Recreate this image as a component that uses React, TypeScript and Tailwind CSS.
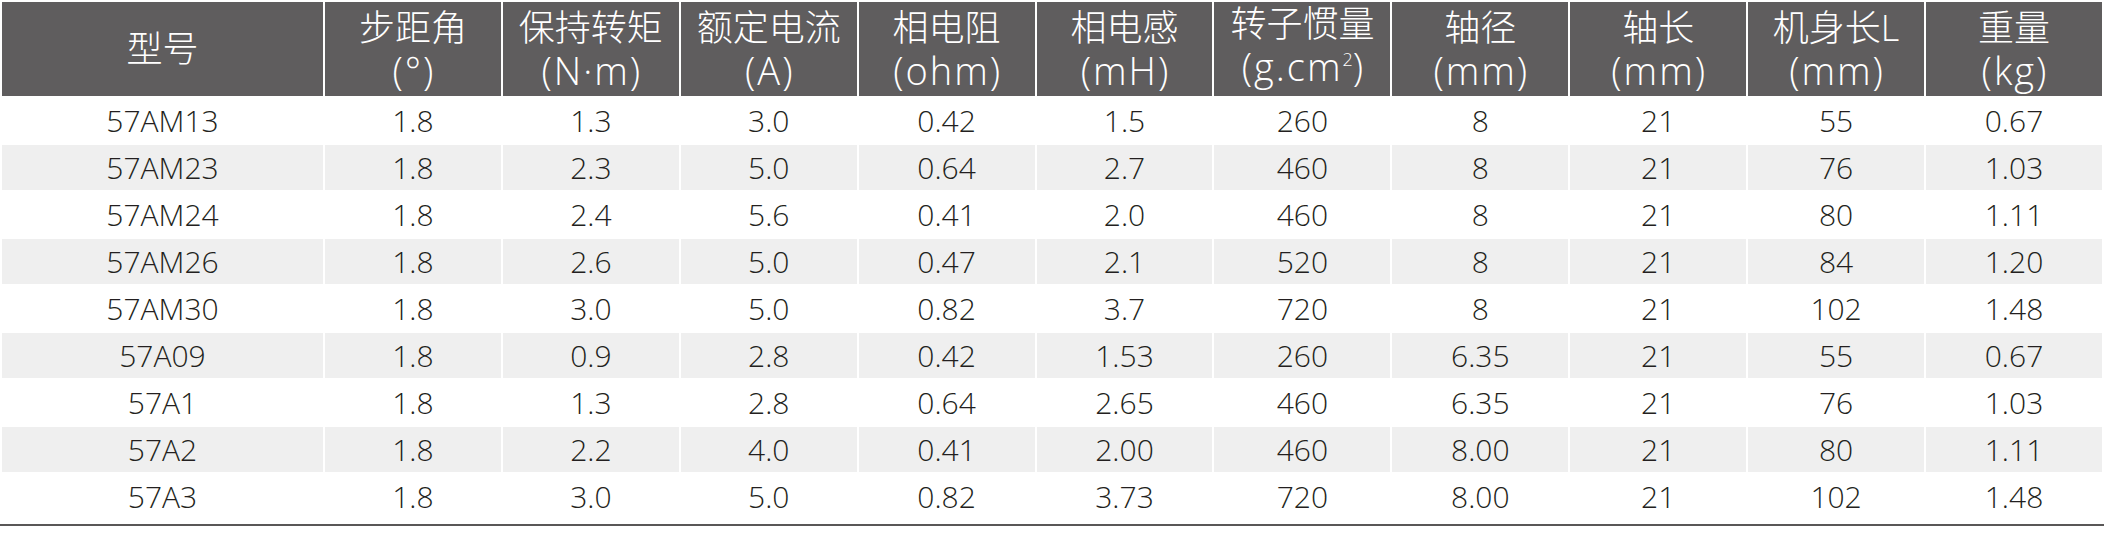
import React from "react";

type Head = { top: string; unit?: React.ReactNode };

const headers: Head[] = [
  { top: "型号" },
  { top: "步距角", unit: "(°)" },
  { top: "保持转矩", unit: "(N·m)" },
  { top: "额定电流", unit: "(A)" },
  { top: "相电阻", unit: "(ohm)" },
  { top: "相电感", unit: "(mH)" },
  {
    top: "转子惯量",
    unit: (
      <>
        (g.cm<span className="relative -top-[15px] text-[18px] tracking-normal">2</span>)
      </>
    ),
  },
  { top: "轴径", unit: "(mm)" },
  { top: "轴长", unit: "(mm)" },
  { top: "机身长L", unit: "(mm)" },
  { top: "重量", unit: "(kg)" },
];

const rows: string[][] = [
  ["57AM13", "1.8", "1.3", "3.0", "0.42", "1.5", "260", "8", "21", "55", "0.67"],
  ["57AM23", "1.8", "2.3", "5.0", "0.64", "2.7", "460", "8", "21", "76", "1.03"],
  ["57AM24", "1.8", "2.4", "5.6", "0.41", "2.0", "460", "8", "21", "80", "1.11"],
  ["57AM26", "1.8", "2.6", "5.0", "0.47", "2.1", "520", "8", "21", "84", "1.20"],
  ["57AM30", "1.8", "3.0", "5.0", "0.82", "3.7", "720", "8", "21", "102", "1.48"],
  ["57A09", "1.8", "0.9", "2.8", "0.42", "1.53", "260", "6.35", "21", "55", "0.67"],
  ["57A1", "1.8", "1.3", "2.8", "0.64", "2.65", "460", "6.35", "21", "76", "1.03"],
  ["57A2", "1.8", "2.2", "4.0", "0.41", "2.00", "460", "8.00", "21", "80", "1.11"],
  ["57A3", "1.8", "3.0", "5.0", "0.82", "3.73", "720", "8.00", "21", "102", "1.48"],
];

export default function App() {
  return (
    <div
      className="w-[2104px] h-[538px] overflow-hidden bg-white"
      style={{ fontFamily: '"Open Sans", "Noto Sans CJK SC", sans-serif' }}
    >
      <table className="w-[2104px] table-fixed border-separate border-spacing-[2.5px]">
        <colgroup>
          <col className="w-[321px]" />
          {headers.slice(1).map((h) => (
            <col key={h.top} />
          ))}
        </colgroup>
        <thead>
          <tr>
            {headers.map((h) => (
              <th
                key={h.top}
                className="h-[94px] bg-[#5f5d5e] p-0 text-center align-middle text-[36px] font-light leading-[42px] text-white"
              >
                <div>{h.top}</div>
                {h.unit && (
                  <div className="pl-[2px] text-[38px] tracking-[2px]">{h.unit}</div>
                )}
              </th>
            ))}
          </tr>
        </thead>
        <tbody>
          {rows.map((r, i) => (
            <tr key={r[0]} className={i % 2 === 1 ? "bg-[#efefef]" : "bg-white"}>
              {r.map((v, j) => (
                <td
                  key={j}
                  className="h-[45px] p-0 text-center align-middle text-[30px] font-light leading-none text-[#231f20]"
                >
                  {v}
                </td>
              ))}
            </tr>
          ))}
        </tbody>
      </table>
      {/* bottom rule */}
      <div className="mt-[3px] h-[2px] w-full bg-[#595757]" />
    </div>
  );
}
